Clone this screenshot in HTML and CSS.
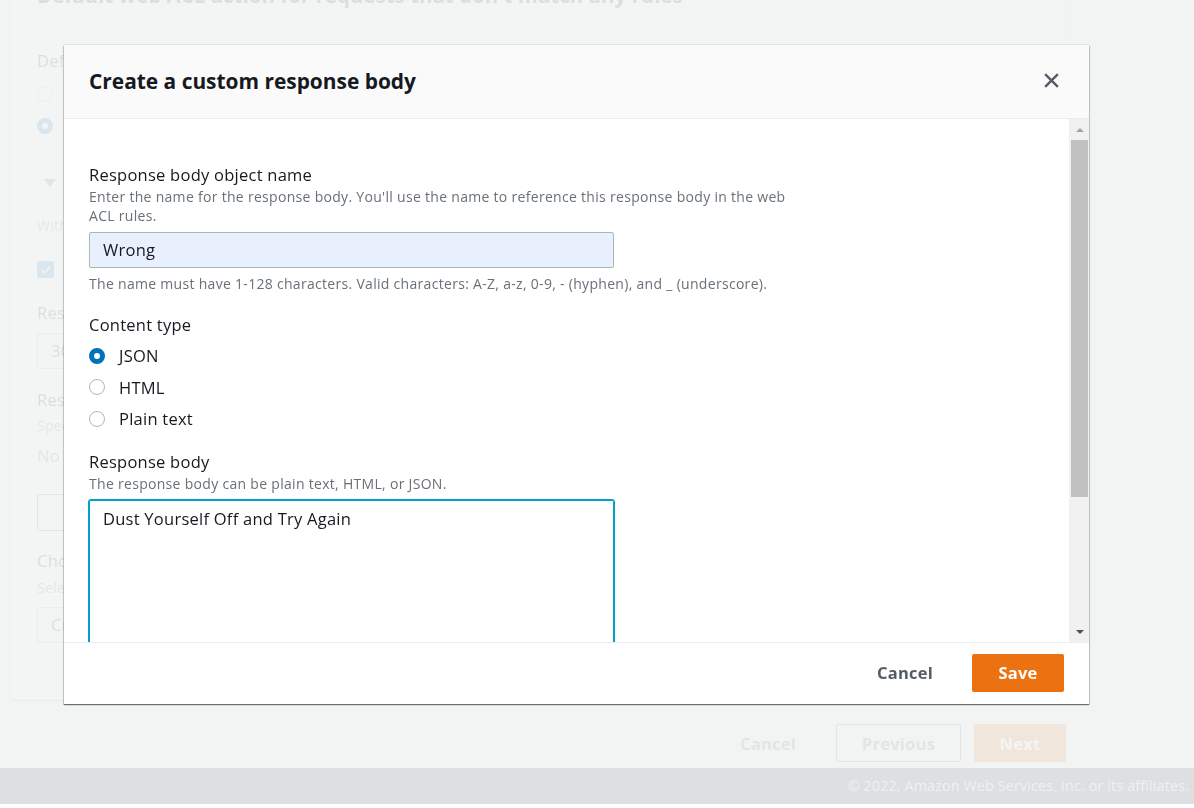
FILE: index.html
```html
<!DOCTYPE html>
<html lang="en">
<head>
<meta charset="utf-8">
<title>Create a custom response body</title>
<link rel="stylesheet" href="styles.css">
</head>
<body>
<div class="page">
  <main class="content">
    <section class="card">
      <header class="card-head"><h2>Default web ACL action for requests that don't match any rules</h2></header>
      <div class="card-body">
        <div class="bg-label">Default action</div>
        <div class="bg-radio-row r1"><span class="radio"></span><span>Allow</span></div>
        <div class="bg-radio-row"><span class="radio checked"></span><span>Block</span></div>
        <div class="bg-expand"><span class="tri"></span><span>Custom response - optional</span></div>
        <div class="bg-desc w1">With the Block action, you can send a custom response to the web request.</div>
        <div class="bg-check"><span class="checkbox"><svg viewBox="0 0 16 16" width="12" height="12"><path d="M2.5 8.5l3.5 3.5 7.5-8" fill="none" stroke="#fff" stroke-width="2.2"/></svg></span><span>Enable</span></div>
        <div class="bg-label l2">Response code</div>
        <div class="bg-input">303</div>
        <div class="bg-label l3">Response headers - optional</div>
        <div class="bg-desc w2">Specify the custom headers to include in the response.</div>
        <div class="bg-text">No custom response headers.</div>
        <div class="bg-button">Add new custom header</div>
        <div class="bg-label l4">Choose how you would like to specify the response body - optional</div>
        <div class="bg-desc w3">Select an existing custom response body or create a new one.</div>
        <div class="bg-input sel">Create a custom response body</div>
      </div>
    </section>
    <div class="actions">
      <span class="act-link">Cancel</span>
      <span class="act-btn">Previous</span>
      <span class="act-primary">Next</span>
    </div>
  </main>
  <footer class="footer">© 2022, Amazon Web Services, Inc. or its affiliates.</footer>
  <div class="overlay"></div>
</div>

<div class="modal" role="dialog">
  <div class="modal-head">
    <h1 class="modal-title">Create a custom response body</h1>
    <span class="close"><svg viewBox="0 0 16 16" width="17" height="17"><path d="M2 2l12 12M14 2L2 14" stroke="#545b64" stroke-width="2.2" fill="none"/></svg></span>
  </div>
  <div class="modal-body">
    <div class="modal-content">
      <div class="field">
        <div class="label">Response body object name</div>
        <div class="desc narrow">Enter the name for the response body. You'll use the name to reference this response body in the web ACL rules.</div>
        <div class="input">Wrong</div>
        <div class="desc hint">The name must have 1-128 characters. Valid characters: A-Z, a-z, 0-9, - (hyphen), and _ (underscore).</div>
      </div>
      <div class="field ct">
        <div class="label">Content type</div>
        <div class="radio-row first"><span class="radio checked"></span><span>JSON</span></div>
        <div class="radio-row"><span class="radio"></span><span>HTML</span></div>
        <div class="radio-row"><span class="radio"></span><span>Plain text</span></div>
      </div>
      <div class="field rb">
        <div class="label">Response body</div>
        <div class="desc">The response body can be plain text, HTML, or JSON.</div>
        <div class="textarea">Dust Yourself Off and Try Again</div>
      </div>
    </div>
    <div class="scrollbar">
      <span class="sb-btn"><span class="arrow-up"></span></span>
      <span class="sb-thumb"></span>
      <span class="sb-space"></span>
      <span class="sb-btn down"><span class="arrow-down"></span></span>
    </div>
  </div>
  <div class="modal-foot">
    <span class="btn-link">Cancel</span>
    <span class="btn-primary">Save</span>
  </div>
</div>
</body>
</html>
```

FILE: styles.css
```css
* { box-sizing: border-box; }
html, body { margin: 0; padding: 0; background: #ffffff; }
body {
  font-family: "Open Sans", "Noto Sans", sans-serif;
  color: #16191f;
  font-size: 16.5px;
  letter-spacing: 0.25px;
}

/* ---------- background page ---------- */
.page {
  position: relative;
  height: 804px;
  overflow: hidden;
  background: #f2f3f3;
  display: flex;
  flex-direction: column;
}
.content {
  flex: 1;
  padding-left: 11px;
  width: 1066px;
}
.card {
  margin-top: -30px;
  height: 730px;
  background: #ffffff;
  border: 1px solid #e1e4e4;
  box-shadow: 0 1px 1px 0 rgba(0, 28, 36, .3);
}
.card-head {
  height: 61px;
  border-bottom: 1px solid #eaeded;
  padding: 11px 25px 0;
}
.card-head h2 {
  margin: 0;
  font-size: 20.5px;
  line-height: 26px;
  font-weight: 700;
  letter-spacing: 0;
}
.card-body {
  padding: 17px 25px 0;
  display: flex;
  flex-direction: column;
  align-items: flex-start;
}
.bg-label { font-size: 16.5px; line-height: 24px; }
.bg-desc { font-size: 14px; line-height: 19px; color: #687078; letter-spacing: 0.3px; }
.bg-text { line-height: 22px; color: #687078; margin-top: 10px; }
.bg-radio-row { display: flex; align-items: center; gap: 14px; height: 32px; }
.bg-radio-row.r1 { margin-top: 5px; }
.bg-expand { display: flex; align-items: center; gap: 12px; height: 24px; margin-top: 29px; font-weight: 700; font-size: 17px; }
.tri {
  width: 0; height: 0;
  margin-left: 7px;
  border-left: 6px solid transparent;
  border-right: 6px solid transparent;
  border-top: 8px solid #545b64;
}
.bg-desc.w1 { margin-top: 21px; }
.bg-check { display: flex; align-items: center; gap: 14px; height: 25px; margin-top: 22px; }
.checkbox {
  width: 17px; height: 17px;
  border-radius: 2px;
  background: #0073bb;
  display: flex; align-items: center; justify-content: center;
}
.bg-label.l2 { margin-top: 19px; }
.bg-input {
  margin-top: 8px;
  width: 525px;
  height: 36px;
  border: 1px solid #aab7b8;
  border-radius: 2px;
  padding: 0 13px;
  line-height: 34px;
  color: #16191f;
}
.bg-label.l3 { margin-top: 19px; }
.bg-desc.w2 { margin-top: 4px; }
.bg-button {
  margin-top: 27px;
  height: 37px;
  border: 1px solid #545b64;
  border-radius: 2px;
  padding: 0 22px 0 34px;
  line-height: 35px;
  font-weight: 700;
  color: #545b64;
}
.bg-label.l4 { margin-top: 18px; }
.bg-desc.w3 { margin-top: 5px; }
.bg-input.sel { margin-top: 10px; }

.actions {
  margin-top: 24px;
  display: flex;
  justify-content: flex-end;
  align-items: center;
  gap: 13px;
  font-weight: 700;
}
.act-link { padding: 0 20px; color: #545b64; margin-right: 7px; }
.act-btn {
  width: 125px; height: 38px;
  border: 1px solid #545b64;
  border-radius: 2px;
  display: flex; align-items: center; justify-content: center;
  color: #545b64;
}
.act-primary {
  width: 92px; height: 38px;
  border-radius: 2px;
  background: #ec7211;
  color: #ffffff;
  display: flex; align-items: center; justify-content: center;
}
.footer {
  height: 36px;
  background: #232f3e;
  color: #d5dbdb;
  font-size: 14.2px;
  letter-spacing: 0.2px;
  line-height: 36px;
  text-align: right;
  padding-right: 5px;
}
.overlay {
  position: absolute;
  inset: 0;
  background: rgba(242, 243, 243, .9);
}

/* ---------- radios ---------- */
.radio {
  width: 16px; height: 16px;
  border-radius: 50%;
  border: 1.5px solid #aab7b8;
  background: #ffffff;
  flex: none;
}
.radio.checked {
  border: 5px solid #0073bb;
}

/* ---------- modal ---------- */
.modal {
  position: fixed;
  left: 64px;
  top: 45px;
  width: 1025px;
  height: 659px;
  background: #ffffff;
  display: flex;
  flex-direction: column;
  box-shadow: 0 1px 1px 0 rgba(0, 28, 36, .45), 1px 1px 1px 0 rgba(0, 28, 36, .15), -1px 1px 1px 0 rgba(0, 28, 36, .15), 0 -1px 0 0 rgba(0, 28, 36, .08);
}
.modal-head {
  height: 74px;
  flex: none;
  background: #fafafa;
  border-bottom: 1px solid #eaeded;
  display: flex;
  align-items: center;
  justify-content: space-between;
  padding: 0 29px 2px 25px;
}
.modal-title {
  margin: 0;
  font-size: 20.9px;
  font-weight: 700;
  line-height: 28px;
  letter-spacing: 0;
}
.close { display: flex; }
.modal-body {
  flex: 1;
  display: flex;
  min-height: 0;
}
.modal-content {
  flex: 1;
  overflow: hidden;
  padding: 44px 25px 0;
}
.label { line-height: 24px; color: #16191f; }
.desc { font-size: 14px; line-height: 19px; color: #687078; letter-spacing: 0.3px; }
.desc.narrow { max-width: 705px; }
.input {
  margin-top: 7px;
  width: 525px;
  height: 36px;
  background: #e8f0fe;
  border: 1px solid #aab7b8;
  border-radius: 2px;
  padding: 0 13px;
  line-height: 34px;
}
.desc.hint { margin-top: 6px; }
.field.ct { margin-top: 20px; }
.radio-row {
  display: flex;
  align-items: center;
  gap: 14px;
  height: 31.5px;
}
.radio-row.first { margin-top: 3px; }
.field.rb { margin-top: 15.5px; }
.textarea {
  margin-top: 7px;
  width: 525px;
  height: 160px;
  border: 1px solid #00a1c9;
  box-shadow: 0 0 0 1px #00a1c9;
  border-radius: 2px;
  padding: 7px 13px;
  line-height: 22px;
}

/* fake scrollbar */
.scrollbar {
  width: 20px;
  flex: none;
  background: #f1f1f1;
  display: flex;
  flex-direction: column;
  align-items: flex-end;
}
.sb-btn {
  width: 18px;
  height: 21px;
  display: flex;
  align-items: center;
  justify-content: center;
}
.arrow-up {
  width: 0; height: 0;
  border-left: 4px solid transparent;
  border-right: 4px solid transparent;
  border-bottom: 4px solid #a3a3a3;
}
.arrow-down {
  width: 0; height: 0;
  border-left: 4px solid transparent;
  border-right: 4px solid transparent;
  border-top: 4px solid #505050;
}
.sb-thumb {
  width: 17px;
  margin-right: 1px;
  height: 357px;
  background: #c1c1c1;
}
.sb-space { flex: 1; }

.modal-foot {
  height: 62px;
  flex: none;
  border-top: 1px solid #eaeded;
  display: flex;
  align-items: center;
  justify-content: flex-end;
  padding: 0 25px 2px;
  gap: 17px;
  font-weight: 700;
}
.btn-link { padding: 0 22px; color: #545b64; }
.btn-primary {
  width: 92px;
  height: 38px;
  border-radius: 2px;
  background: #ec7211;
  color: #ffffff;
  display: flex;
  align-items: center;
  justify-content: center;
}
```
